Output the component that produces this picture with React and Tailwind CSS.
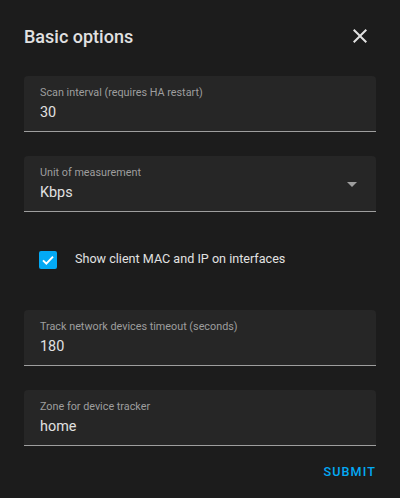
import React, { useState } from "react";

function Field({ label, value, select }) {
  return (
    <div className="relative h-14 rounded-t bg-[#262626] border-b border-[#9e9e9e] px-4">
      <div className="pt-[10px] text-[10.8px] leading-[13px] text-[#9e9e9e]">{label}</div>
      <div className="mt-[5px] text-[14.4px] leading-[18px] text-[#e1e1e1]">{value}</div>
      {select && (
        <svg className="absolute right-3 top-4 h-6 w-6" viewBox="0 0 24 24" fill="#9e9e9e">
          <path d="M7 10l5 5 5-5z" />
        </svg>
      )}
    </div>
  );
}

function App() {
  const [checked, setChecked] = useState(true);

  return (
    <div className="min-h-[498px] w-[400px] bg-[#1c1c1c] px-6 font-['Roboto',sans-serif]">
      <div className="flex h-[76px] items-center justify-between pb-1">
        <h2 className="text-[18px] font-medium text-[#e1e1e1]">Basic options</h2>
        <button className="mr-1 flex h-6 w-6 items-center justify-center">
          <svg viewBox="0 0 24 24" className="h-6 w-6" fill="#e1e1e1">
            <path d="M19 6.41L17.59 5 12 10.59 6.41 5 5 6.41 10.59 12 5 17.59 6.41 19 12 13.41 17.59 19 19 17.59 13.41 12z" />
          </svg>
        </button>
      </div>

      <Field label="Scan interval (requires HA restart)" value="30" />
      <div className="h-6" />
      <Field label="Unit of measurement" value="Kbps" select />

      <div className="flex h-[98px] items-center pb-[3px] pl-[15px]">
        <button
          onClick={() => setChecked(!checked)}
          className={
            checked
              ? "flex h-[18px] w-[18px] items-center justify-center rounded-[2px] bg-[#03a9f4]"
              : "h-[18px] w-[18px] rounded-[2px] border-2 border-[#9e9e9e]"
          }
        >
          {checked && (
            <svg viewBox="0 0 24 24" className="h-[16px] w-[16px]" fill="none" stroke="#fff" strokeWidth="3">
              <path d="M4.5 12.5l5 5 10-10.5" />
            </svg>
          )}
        </button>
        <span className="ml-[18px] text-[12.6px] text-[#e1e1e1]">Show client MAC and IP on interfaces</span>
      </div>

      <Field label="Track network devices timeout (seconds)" value="180" />
      <div className="h-6" />
      <Field label="Zone for device tracker" value="home" />

      <div className="flex justify-end pt-[17px]">
        <button className="text-[12.6px] font-medium uppercase tracking-[1.1px] text-[#03a9f4]">Submit</button>
      </div>
    </div>
  );
}

export default App;
